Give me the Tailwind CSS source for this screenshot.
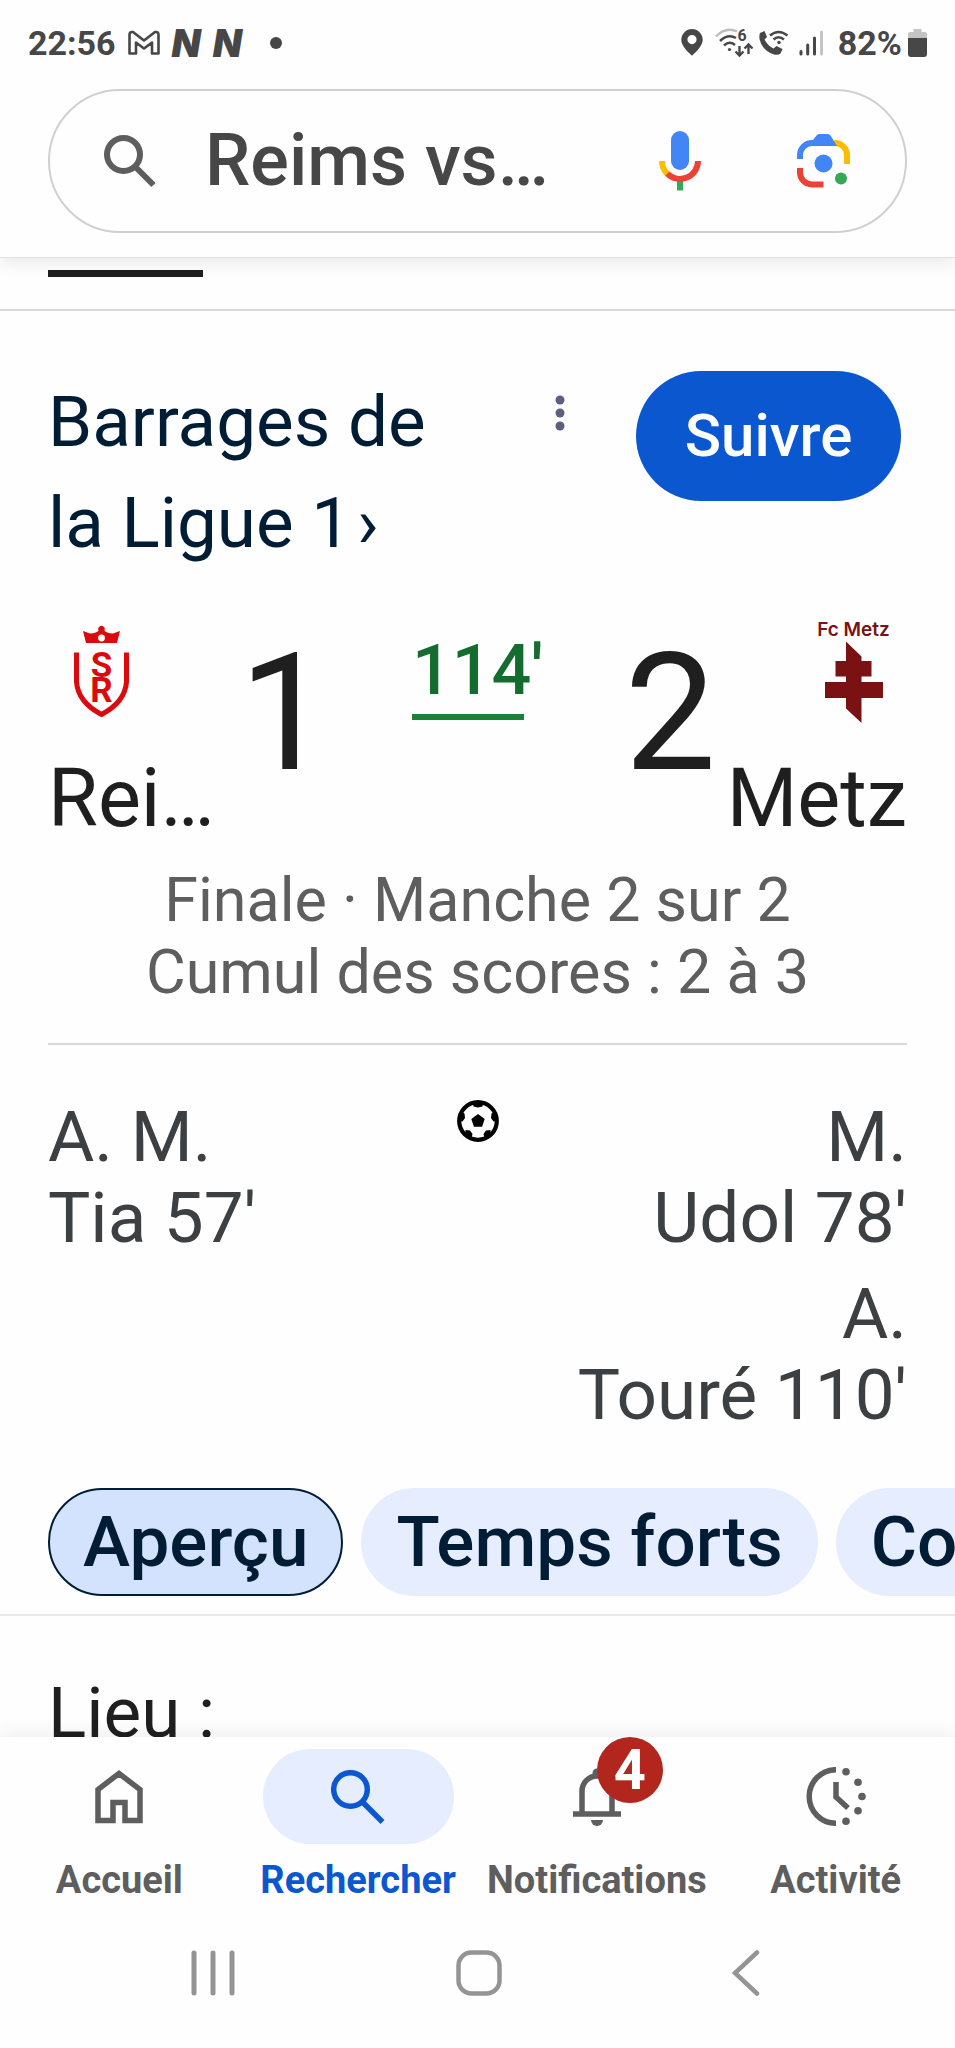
<!DOCTYPE html>
<html lang="fr">
<head>
    <meta charset="UTF-8">
    <meta name="viewport" content="width=device-width, initial-scale=1.0">
    <title>Reims vs Metz</title>
    <script src="https://cdn.jsdelivr.net/npm/@tailwindcss/browser@4"></script>
</head>
<body class="h-screen flex flex-col overflow-hidden bg-[#fefefe] font-['Roboto',sans-serif] text-[#1f1f1f]">

    <!-- Status bar + search -->
    <header class="relative z-10 shrink-0 bg-[#fefefe] border-b border-[#e0e0e0] shadow-[0_6px_16px_rgba(0,0,0,0.08)] pb-6">
        <div class="flex items-center justify-between px-7 pt-[18px] pb-[22px] h-[89px] text-[#474747]">
            <div class="flex items-center gap-2">
                <span class="text-[34px] leading-[44px] font-bold">22:56</span>
                <svg class="ml-1" width="32" height="26" viewBox="0 0 32 26" fill="none" stroke="currentColor" stroke-width="2.6" stroke-linejoin="round">
                    <path d="M1.5 4.5Q1.800 1.500 5 2L16 10.500L27 2Q30.200 1.500 30.500 4.500V23.500H24V12.500L16 18.500L8 12.500V23.500H1.500Z"/>
                </svg>
                <span class="ml-1 font-['Inter',sans-serif] text-[38px] leading-[44px] font-black italic">N</span>
                <span class="ml-1 font-['Inter',sans-serif] text-[38px] leading-[44px] font-black italic">N</span>
                <span class="ml-5 size-3 rounded-full bg-[#474747]"></span>
            </div>
            <div class="flex items-center gap-1.5">
                <svg width="22" height="27" viewBox="0 0 22 27" fill="currentColor">
                    <path fill-rule="evenodd" d="M11 0A10.700 10.700 0 0 0 .3 10.700C.3 18 11 26.500 11 26.500S21.700 18 21.700 10.700A10.700 10.700 0 0 0 11 0ZM11 6a4.600 4.600 0 1 1 0 9.200A4.600 4.600 0 0 1 11 6Z"/>
                </svg>
                <svg class="ml-1.5 overflow-visible" width="38" height="29" viewBox="0 0 38 29" fill="none" stroke="currentColor" stroke-width="2.400">
                    <path stroke="#bdbdbd" d="M1 8.500Q11 -1.500 22 3.500"/>
                    <path d="M5 13Q13 5.500 21 10M9 17.500Q14.500 12.500 20 17"/>
                    <circle cx="14.500" cy="21.500" r="1.600" fill="currentColor" stroke="none"/>
                    <path d="M24.500 18V27M20.500 23.500L24.500 27.500L28.500 23.500M33.500 26V17M29.500 20.500L33.500 16.500L37.500 20.500"/>
                    <text x="22.500" y="12.500" font-size="16" font-weight="700" fill="currentColor" stroke="none">6</text>
                </svg>
                <svg width="30" height="26" viewBox="0 0 30 26" fill="none" stroke="currentColor" stroke-width="2.600">
                    <path fill="currentColor" stroke="none" d="M1 3L5.500 1L8 7L5.500 9.500Q8.500 15.500 14.500 18.500L17.500 16L23.500 19L21.500 23.500Q19.500 25.500 15 24.500Q3 20.500 .5 9Q0 5 1 3Z"/>
                    <path d="M11 5.500Q19.500 -1.500 28.500 5.500M14.500 9.500Q19.500 5 25 9.500"/>
                    <circle cx="20" cy="12.500" r="1.700" fill="currentColor" stroke="none"/>
                </svg>
                <svg class="mx-1" width="25" height="26" viewBox="0 0 25 26" fill="none" stroke="currentColor" stroke-width="3" stroke-linecap="round">
                    <path d="M2 21.500V24M8.700 15V24M15.500 8V24"/>
                    <path stroke="#c4c4c4" d="M22.500 2V24"/>
                </svg>
                <span class="ml-1 text-[34px] leading-[44px] font-bold">82%</span>
                <svg width="19" height="28" viewBox="0 0 19 28">
                    <path fill="#c4c4c4" d="M5.500 0H13.500V3H17Q19 3 19 5V10H0V5Q0 3 2 3H5.500Z"/>
                    <path fill="#474747" d="M0 9H19V25Q19 28 16 28H3Q0 28 0 25Z"/>
                </svg>
            </div>
        </div>

        <form class="mx-12 h-36 flex items-center rounded-full border-2 border-[#d0d0d0] px-[54px]">
            <svg class="shrink-0" width="53" height="53" viewBox="0 0 53 53" fill="none" stroke="#5e5e5e" stroke-width="6">
                <circle cx="19.500" cy="19.500" r="16.500"/>
                <path d="M31.500 32L49.500 50"/>
            </svg>
            <input type="text" aria-label="Recherche" value="Reims vs…" class="ml-12 min-w-0 flex-1 bg-transparent text-[72px] leading-[84px] font-medium text-[#474747] outline-none">
            <button type="button" aria-label="Recherche vocale" class="shrink-0">
                <svg width="42" height="60" viewBox="0 0 42 60" fill="none" stroke-width="6">
                    <rect x="12" y="0" width="18" height="39" rx="9" fill="#4285f4"/>
                    <path stroke="#34a853" d="M21 50V59.500"/>
                    <path stroke="#fbbc04" d="M3 30A18 18 0 0 0 8.500 43"/>
                    <path stroke="#ea4335" d="M8.300 42.700A18 18 0 0 0 39 30"/>
                </svg>
            </button>
            <button type="button" aria-label="Google Lens" class="ml-24 shrink-0">
                <svg width="54" height="54" viewBox="0 0 54 54" fill="none" stroke-width="6">
                    <path stroke="#fbbc04" d="M37 9H38A12 12 0 0 1 50 21V30"/>
                    <path stroke="#4285f4" d="M3 25V21A12 12 0 0 1 15 9H30"/>
                    <path fill="#4285f4" d="M14 12V6H16L19.500 1.500Q20.500 0 22 0H31Q32.500 0 33.500 1.500L40 12Z"/>
                    <path stroke="#ea4335" d="M3 34V38.500A12 12 0 0 0 15 50.500H26.500"/>
                    <circle cx="26.500" cy="29.500" r="9" fill="#4285f4"/>
                    <circle cx="44" cy="44.500" r="6" fill="#34a853"/>
                </svg>
            </button>
        </form>
    </header>

    <main class="flex-1 min-h-0 overflow-hidden">
        <!-- Active tab indicator -->
        <div class="border-b-2 border-[#dadada] pt-3 pb-8 px-12">
            <div class="h-[7px] w-[155px] bg-[#1f1f1f]"></div>
        </div>

        <section class="px-12 pt-[60px]">
            <div class="flex items-start">
                <h1 class="flex-1 text-[71px] leading-[101px] text-[#001d35]">
                    <a href="#">Barrages de la Ligue&nbsp;1<span class="ml-1.5">›</span></a>
                </h1>
                <button type="button" aria-label="Plus d'options" class="w-[152px] pt-6 flex justify-center">
                    <svg width="10" height="38" viewBox="0 0 10 38" fill="#5c5f7e">
                        <circle cx="5" cy="5" r="4.500"/>
                        <circle cx="5" cy="18" r="4.500"/>
                        <circle cx="5" cy="31" r="4.500"/>
                    </svg>
                </button>
                <button type="button" class="mr-1.5 h-[130px] w-[265px] rounded-full bg-[#0b57d0] text-[60px] font-medium text-white">Suivre</button>
            </div>

            <!-- Score -->
            <div class="mt-[45px] flex items-start justify-between">
                <div class="flex">
                    <div class="w-[191px]">
                        <svg width="107" height="107" viewBox="0 0 107 107" fill="none">
                            <path fill="#dc0a0f" d="M35 13L42 15.500Q49 15 50.500 12.500A3.300 3.300 0 1 1 56.500 12.500Q58 15 65 15.500L72 13L69 25H38Z"/>
                            <circle cx="53.500" cy="20" r="3.400" fill="#fefefe"/>
                            <path stroke="#dc0a0f" stroke-width="5" d="M28.500 34.500V64Q30 84 53.500 96.500Q77 84 78.500 64V34.500"/>
                            <text x="53.500" y="59" text-anchor="middle" font-size="35" font-weight="700" fill="#dc0a0f">S</text>
                            <text x="53.500" y="84" text-anchor="middle" font-size="35" font-weight="700" fill="#dc0a0f">R</text>
                        </svg>
                        <div class="mt-[26px] truncate text-[81px] leading-[96px]">Reims</div>
                    </div>
                    <div class="pt-3 text-[163px] leading-[168px]">1</div>
                </div>
                <div class="pt-3">
                    <div class="text-[70px] leading-[80px] font-medium text-[#146c2e]">114'</div>
                    <div class="mt-1 h-1.5 w-28 bg-[#1e8038]"></div>
                </div>
                <div class="flex">
                    <div class="pt-3 text-[163px] leading-[168px]">2</div>
                    <div class="w-[191px] flex flex-col items-end">
                        <svg width="107" height="107" viewBox="0 0 107 107" fill="#7a1214">
                            <text x="53.500" y="17.500" text-anchor="middle" font-family="Inter" font-size="19" font-weight="600">Fc Metz</text>
                            <path d="M46 23.500L61.500 38.500V43H71.500V58.500H61.500V64H83V80H61.500V105L46 90.500V80H25V64H46V58.500H35.500V43H46Z"/>
                        </svg>
                        <div class="mt-[26px] text-[81px] leading-[96px]">Metz</div>
                    </div>
                </div>
            </div>

            <p class="mt-[17px] border-b-2 border-[#dadada] pb-[35px] text-center text-[61px] leading-[72px] text-[#5e5e5e]">
                Finale · Manche 2 sur 2<br>Cumul des scores : 2 à 3
            </p>

            <!-- Goals -->
            <div class="mt-[51px] grid grid-cols-[1fr_auto_1fr] text-[71px] leading-[81px] text-[#3c4043]">
                <div>A. M.<br>Tia 57'</div>
                <svg class="mt-1" width="42" height="42" viewBox="0 0 42 42" fill="#000">
                    <circle cx="21" cy="21" r="18.800" fill="none" stroke="#000" stroke-width="4.200"/>
                    <path d="M21 14L27.700 18.900L25.100 26.800H16.900L14.300 18.900Z"/>
                    <path d="M16 3H26L25.500 6.500L21 7.500L16.500 6.500ZM3 17L4.500 12L7.500 13.500L8 18L5.500 21.500L2.500 21ZM39 17L37.500 12L34.500 13.500L34 18L36.500 21.500L39.500 21ZM8.500 34L8.500 30L13 30.500L15.500 34L14.500 38ZM33.500 34L33.500 30L29 30.500L26.500 34L27.500 38Z"/>
                </svg>
                <div class="flex flex-col gap-[15px] text-right">
                    <div>M.<br>Udol 78'</div>
                    <div>A.<br>Touré 110'</div>
                </div>
            </div>
        </section>

        <div class="mt-[53px] flex gap-[18px] overflow-hidden border-b-2 border-[#e8e8e8] pl-12 pb-[18px] text-[71px] leading-[104px] font-medium text-[#001d35]">
            <button type="button" class="shrink-0 rounded-full border-2 border-[#001d35] bg-[#d3e3fd] px-[33px]">Aperçu</button>
            <button type="button" class="shrink-0 rounded-full border-2 border-[#e5edff] bg-[#e5edff] px-[33px]">Temps forts</button>
            <button type="button" class="shrink-0 rounded-full border-2 border-[#e5edff] bg-[#e5edff] px-[33px]">Compositions</button>
        </div>

        <p class="mt-14 px-12 text-[71px] leading-[82px]">Lieu :</p>
    </main>

    <nav class="relative z-10 shrink-0 bg-[#fefefe] pt-3 grid grid-cols-4 text-center text-[38px] leading-[44px] font-bold text-[#5e5e5e] shadow-[0_-6px_16px_rgba(0,0,0,0.05)]">
        <a href="#" class="flex flex-col items-center gap-3.5">
            <span class="flex h-[95px] items-center">
                <svg width="48" height="54" viewBox="0 0 48 54" fill="none" stroke="currentColor" stroke-width="5.500">
                    <path d="M24 3.500L3 19.500V50.500H18V32.500H30V50.500H45V19.500Z"/>
                </svg>
            </span>
            Accueil
        </a>
        <a href="#" class="flex flex-col items-center gap-3.5 text-[#0b57d0]">
            <span class="flex h-[95px] w-[191px] items-center justify-center rounded-full bg-[#e5edff]">
                <svg width="54" height="54" viewBox="0 0 54 54" fill="none" stroke="currentColor" stroke-width="5.500">
                    <circle cx="19.500" cy="19.500" r="16.800"/>
                    <path d="M31 31.500L51.500 52"/>
                </svg>
            </span>
            Rechercher
        </a>
        <a href="#" class="flex flex-col items-center gap-3.5">
            <span class="relative flex h-[95px] items-center">
                <svg width="48" height="58" viewBox="0 0 48 58" fill="none" stroke="currentColor" stroke-width="5.500">
                    <circle cx="24" cy="5" r="4.500" fill="currentColor" stroke="none"/>
                    <path d="M9 46V23A15 15 0 0 1 39 23V46M0 46H48"/>
                    <path fill="currentColor" stroke="none" d="M18 52H30A6 6 0 0 1 18 52Z"/>
                </svg>
                <span class="absolute -top-3 left-6 flex size-[66px] items-center justify-center rounded-full bg-[#b3261e] text-[56px] text-white">4</span>
            </span>
            Notifications
        </a>
        <a href="#" class="flex flex-col items-center gap-3.5">
            <span class="flex h-[95px] items-center">
                <svg width="60" height="59" viewBox="0 0 60 59" fill="none" stroke="currentColor" stroke-width="5.500">
                    <path d="M30 2.700A26.800 26.800 0 0 0 30 56.300M30 15V30L42 41"/>
                    <g fill="currentColor" stroke="none">
                        <circle cx="40" cy="4.700" r="3.800"/>
                        <circle cx="52" cy="15.200" r="3.800"/>
                        <circle cx="56" cy="29.500" r="3.800"/>
                        <circle cx="52" cy="43.800" r="3.800"/>
                        <circle cx="40" cy="54.300" r="3.800"/>
                    </g>
                </svg>
            </span>
            Activité
        </a>
    </nav>

    <!-- System buttons -->
    <div class="relative z-10 shrink-0 bg-[#fefefe] pl-20 pr-19 pt-12 pb-[52px] grid grid-cols-3 justify-items-center text-[#949494]">
        <button type="button" aria-label="Applications récentes">
            <svg width="44" height="46" viewBox="0 0 44 46" stroke="currentColor" stroke-width="5" stroke-linecap="round">
                <path d="M3 3V43M22 3V43M41 3V43"/>
            </svg>
        </button>
        <button type="button" aria-label="Écran d'accueil">
            <svg width="46" height="46" viewBox="0 0 46 46" fill="none" stroke="currentColor" stroke-width="4.500">
                <rect x="2.500" y="2.500" width="41" height="41" rx="13"/>
            </svg>
        </button>
        <button type="button" aria-label="Retour">
            <svg width="28" height="46" viewBox="0 0 28 46" fill="none" stroke="currentColor" stroke-width="4.500" stroke-linecap="round">
                <path d="M25 2.500L3 23L25 43.500"/>
            </svg>
        </button>
    </div>
</body>
</html>
